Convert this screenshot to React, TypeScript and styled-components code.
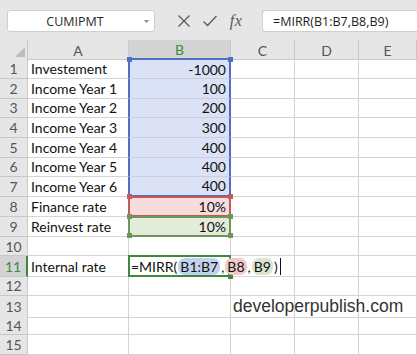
import React from "react";
import styled, { createGlobalStyle, css } from "styled-components";

const Global = createGlobalStyle`
  html, body { margin: 0; padding: 0; background: #ffffff; }
  body { width: 417px; height: 355px; overflow: hidden; }
  * { box-sizing: border-box; }
`;

const COLS = "28px 101px 102px 64px 64px 58px";
const GRID = "#d4d4d4";
const HEAD_BG = "#e6e6e6";
const GREEN = "#3b8a3e";

type RangeColor = "blue" | "red" | "green";
const RANGE: Record<RangeColor, { fill: string; line: string; pill: string }> = {
  blue: { fill: "#dbe2f5", line: "#4e6fc3", pill: "#c3d1ef" },
  red: { fill: "#f6dcdb", line: "#c2595a", pill: "#f2c9c8" },
  green: { fill: "#e3ebdb", line: "#6d9657", pill: "#d8e4cc" },
};

const Page = styled.div`
  width: 417px;
  height: 355px;
  overflow: hidden;
  display: flex;
  flex-direction: column;
  background: #ffffff;
`;

const Toolbar = styled.div`
  height: 41px;
  background: ${HEAD_BG};
  display: flex;
  align-items: flex-start;
  padding: 10px 0 0 7px;
`;

const NameBox = styled.div`
  width: 148px;
  height: 22px;
  background: #fff;
  border: 1px solid #cfcfcf;
  border-radius: 3px;
  display: flex;
  align-items: center;
  justify-content: center;
  position: relative;
  font-family: "Open Sans", sans-serif;
  font-size: 12.5px;
  color: #2b2b2b;
  padding-right: 12px;
`;

const DropArrow = styled.svg`
  position: absolute;
  right: 5px;
  top: 9px;
`;

const IconGroup = styled.div`
  display: flex;
  align-items: center;
  height: 22px;
  margin-left: 16px;
`;

const IconSlot = styled.div`
  width: 26px;
  height: 22px;
  display: flex;
  align-items: center;
  justify-content: center;
`;

const Fx = styled.span`
  font-family: "Liberation Serif", serif;
  font-style: italic;
  font-size: 16px;
  color: #5a5a5a;
  letter-spacing: 0.5px;
`;

const FormulaBox = styled.div`
  flex: 1;
  margin-left: 13px;
  height: 22px;
  background: #fff;
  border: 1px solid #cfcfcf;
  border-right: none;
  border-radius: 3px 0 0 3px;
  display: flex;
  align-items: center;
  padding-left: 10px;
  font-family: "Open Sans", sans-serif;
  font-size: 12.5px;
  color: #1e1e1e;
`;

const Row = styled.div<{ $h: number }>`
  display: grid;
  grid-template-columns: ${COLS};
  height: ${(p) => p.$h}px;
`;

const baseCell = css`
  border-right: 1px solid ${GRID};
  border-bottom: 1px solid ${GRID};
  font-family: "Lato", sans-serif;
  font-size: 14px;
  display: flex;
  align-items: center;
  white-space: nowrap;
  position: relative;
`;

const ColHead = styled.div<{ $active?: boolean }>`
  ${baseCell};
  justify-content: center;
  background: ${(p) => (p.$active ? "#d3d3d3" : HEAD_BG)};
  color: ${(p) => (p.$active ? "#3d8a40" : "#555")};
  border-right-color: #c8c8c8;
  border-bottom: ${(p) => (p.$active ? `2px solid ${GREEN}` : "1px solid #c8c8c8")};
  padding-top: 1px;
`;

const Corner = styled.div`
  ${baseCell};
  background: ${HEAD_BG};
  border-right-color: #c8c8c8;
  border-bottom-color: #c8c8c8;
  justify-content: flex-end;
  align-items: flex-end;
  padding: 0 2px 2px 0;
`;

const RowHead = styled.div<{ $active?: boolean }>`
  ${baseCell};
  justify-content: center;
  background: ${(p) => (p.$active ? "#d3d3d3" : HEAD_BG)};
  color: ${(p) => (p.$active ? "#3d8a40" : "#555")};
  border-bottom-color: #c8c8c8;
  border-right: ${(p) => (p.$active ? `2px solid ${GREEN}` : "1px solid #c8c8c8")};
`;

const Cell = styled.div<{ $overflow?: boolean }>`
  ${baseCell};
  justify-content: flex-start;
  padding: 0 3px;
  color: #111;
  overflow: ${(p) => (p.$overflow ? "visible" : "hidden")};
  z-index: ${(p) => (p.$overflow ? 2 : "auto")};
`;

const RangeCell = styled.div<{ $c: RangeColor; $top?: boolean; $bottom?: boolean }>`
  ${baseCell};
  justify-content: flex-end;
  padding: 0 3px;
  color: #111;
  margin-left: -1px;
  background: ${(p) => RANGE[p.$c].fill};
  border-right: 2px solid ${(p) => RANGE[p.$c].line};
  border-left: 2px solid ${(p) => RANGE[p.$c].line};
  border-bottom: ${(p) => (p.$bottom ? `2px solid ${RANGE[p.$c].line}` : "1px solid #c9cfdf")};
  border-top: ${(p) => (p.$top ? `2px solid ${RANGE[p.$c].line}` : "none")};
  ${(p) => (p.$top ? "margin-top: -1px;" : "")}
  z-index: 1;
`;

const Handle = styled.span<{ $c: string; $side: "l" | "r"; $v: "t" | "b" }>`
  position: absolute;
  width: 5px;
  height: 5px;
  background: ${(p) => p.$c};
  ${(p) => (p.$side === "l" ? "left: -3.5px;" : "right: -3.5px;")}
  ${(p) => (p.$v === "t" ? "top: -3.5px;" : "bottom: -3.5px;")}
  z-index: 3;
`;

const ActiveCell = styled.div`
  ${baseCell};
  margin-left: -1px;
  margin-top: -1px;
  border: 2px solid ${GREEN};
  padding: 0 1px;
  overflow: visible;
  z-index: 2;
  color: #111;
`;

const FormulaText = styled.span`
  display: inline-flex;
  align-items: center;
  white-space: nowrap;
  flex: none;
  position: relative;
  z-index: 4;
`;

const Pill = styled.span<{ $c: RangeColor }>`
  background: ${(p) => RANGE[p.$c].pill};
  border-radius: 7px;
  padding: 0 2px;
  margin: 0 1px;
  line-height: 17px;
`;

const Caret = styled.span`
  display: inline-block;
  width: 1px;
  height: 17px;
  background: #111;
  margin-left: 2px;
`;

const Watermark = styled.span`
  font-family: "Liberation Sans", Arial, sans-serif;
  font-size: 17.5px;
  color: #333;
  margin-left: -1px;
`;

type RowData = { a?: string; b?: string; range?: RangeColor; top?: boolean; bottom?: boolean };

const data: RowData[] = [
  { a: "Investement", b: "-1000", range: "blue", top: true },
  { a: "Income Year 1", b: "100", range: "blue" },
  { a: "Income Year 2", b: "200", range: "blue" },
  { a: "Income Year 3", b: "300", range: "blue" },
  { a: "Income Year 4", b: "400", range: "blue" },
  { a: "Income Year 5", b: "400", range: "blue" },
  { a: "Income Year 6", b: "400", range: "blue", bottom: true },
  { a: "Finance rate", b: "10%", range: "red", top: true, bottom: true },
  { a: "Reinvest rate", b: "10%", range: "green", top: true, bottom: true },
];

const Xicon = () => (
  <svg width="14" height="14" viewBox="0 0 14 14">
    <path d="M1.5 1.5 L12.5 12.5 M12.5 1.5 L1.5 12.5" stroke="#5a5a5a" strokeWidth="1.3" fill="none" />
  </svg>
);

const CheckIcon = () => (
  <svg width="16" height="14" viewBox="0 0 16 14">
    <path d="M1.5 7.5 L5.5 11.5 L14.5 2" stroke="#5a5a5a" strokeWidth="1.3" fill="none" />
  </svg>
);

const Empty = () => (
  <>
    <Cell />
    <Cell />
    <Cell />
    <Cell />
    <Cell />
  </>
);

export default function App() {
  return (
    <Page>
      <Global />
      <Toolbar>
        <NameBox>
          CUMIPMT
          <DropArrow width="5" height="3" viewBox="0 0 5 3">
            <path d="M0 0 L5 0 L2.5 3 Z" fill="#8a8a8a" />
          </DropArrow>
        </NameBox>
        <IconGroup>
          <IconSlot><Xicon /></IconSlot>
          <IconSlot><CheckIcon /></IconSlot>
          <IconSlot><Fx>fx</Fx></IconSlot>
        </IconGroup>
        <FormulaBox>=MIRR(B1:B7,B8,B9)</FormulaBox>
      </Toolbar>

      <Row $h={19}>
        <Corner>
          <svg width="10" height="10" viewBox="0 0 10 10">
            <path d="M10 0 L10 10 L0 10 Z" fill="#bdbdbd" />
          </svg>
        </Corner>
        <ColHead>A</ColHead>
        <ColHead $active>B</ColHead>
        <ColHead>C</ColHead>
        <ColHead>D</ColHead>
        <ColHead>E</ColHead>
      </Row>

      {data.map((r, i) => {
        const c = r.range!;
        const line = RANGE[c].line;
        return (
          <Row $h={20} key={i}>
            <RowHead>{i + 1}</RowHead>
            <Cell>{r.a}</Cell>
            <RangeCell $c={c} $top={r.top} $bottom={r.bottom}>
              {r.top && <Handle $c={line} $side="l" $v="t" />}
              {r.top && <Handle $c={line} $side="r" $v="t" />}
              {r.bottom && c === "green" && <Handle $c={line} $side="l" $v="b" />}
              {r.bottom && c === "green" && <Handle $c={line} $side="r" $v="b" />}
              {r.b}
            </RangeCell>
            <Cell />
            <Cell />
            <Cell />
          </Row>
        );
      })}

      <Row $h={20}>
        <RowHead>10</RowHead>
        <Empty />
      </Row>

      <Row $h={21}>
        <RowHead $active>11</RowHead>
        <Cell>Internal rate</Cell>
        <ActiveCell>
          <FormulaText>
            =MIRR(<Pill $c="blue">B1:B7</Pill>,<Pill $c="red">B8</Pill>,<Pill $c="green">B9</Pill>)
            <Caret />
          </FormulaText>
          <Handle $c={GREEN} $side="r" $v="b" />
        </ActiveCell>
        <Cell />
        <Cell />
        <Cell />
      </Row>

      <Row $h={19}>
        <RowHead>12</RowHead>
        <Empty />
      </Row>
      <Row $h={20}>
        <RowHead>13</RowHead>
        <Cell />
        <Cell />
        <Cell $overflow>
          <Watermark>developerpublish.com</Watermark>
        </Cell>
        <Cell />
        <Cell />
      </Row>
      <Row $h={20}>
        <RowHead>14</RowHead>
        <Empty />
      </Row>
      <Row $h={20}>
        <RowHead>15</RowHead>
        <Empty />
      </Row>
    </Page>
  );
}
